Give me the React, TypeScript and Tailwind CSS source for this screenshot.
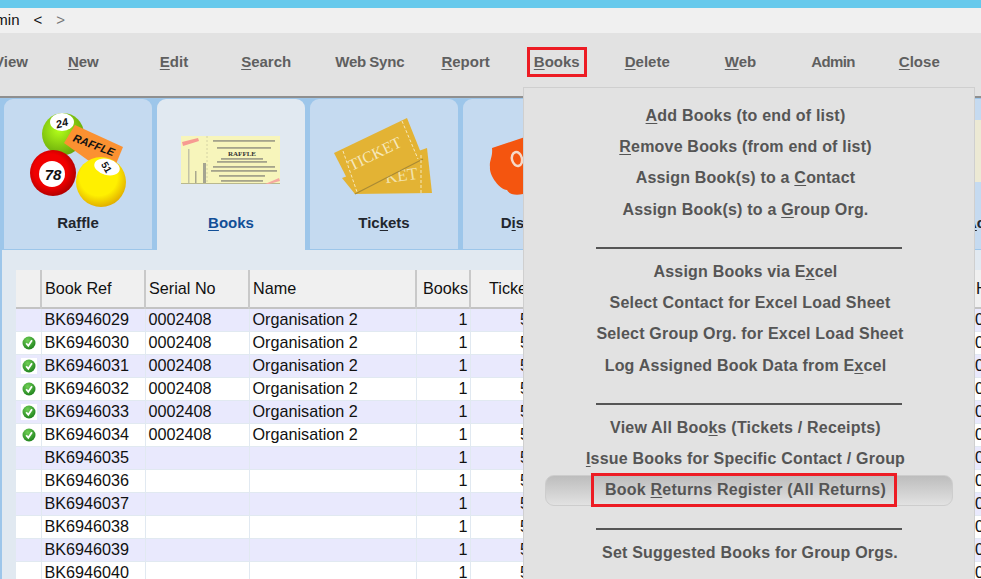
import type { ReactNode } from 'react';

const rows = [
  { ref: 'BK6946029', serial: '0002408', name: 'Organisation 2', ok: false },
  { ref: 'BK6946030', serial: '0002408', name: 'Organisation 2', ok: true },
  { ref: 'BK6946031', serial: '0002408', name: 'Organisation 2', ok: true },
  { ref: 'BK6946032', serial: '0002408', name: 'Organisation 2', ok: true },
  { ref: 'BK6946033', serial: '0002408', name: 'Organisation 2', ok: true },
  { ref: 'BK6946034', serial: '0002408', name: 'Organisation 2', ok: true },
  { ref: 'BK6946035', serial: '', name: '', ok: false },
  { ref: 'BK6946036', serial: '', name: '', ok: false },
  { ref: 'BK6946037', serial: '', name: '', ok: false },
  { ref: 'BK6946038', serial: '', name: '', ok: false },
  { ref: 'BK6946039', serial: '', name: '', ok: false },
  { ref: 'BK6946040', serial: '', name: '', ok: false },
];

function ToolItem({ className, children }: { className: string; children: ReactNode }) {
  return <span className={'shrink-0 whitespace-nowrap ' + className}>{children}</span>;
}

function Toolbar() {
  return (
    <div className="flex h-[63px] items-center bg-[#e2e2e2] pb-[5px] text-[15px] font-bold text-[#5f5f5f]">
      <ToolItem className="ml-[-6px]">View</ToolItem>
      <ToolItem className="ml-[40px]"><u className="underline-offset-2">N</u>ew</ToolItem>
      <ToolItem className="ml-[61px]"><u className="underline-offset-2">E</u>dit</ToolItem>
      <ToolItem className="ml-[53px]"><u className="underline-offset-2">S</u>earch</ToolItem>
      <ToolItem className="ml-[44px] tracking-[-0.15px] [word-spacing:-1px]">Web Sync</ToolItem>
      <ToolItem className="ml-[37px]"><u className="underline-offset-2">R</u>eport</ToolItem>
      <ToolItem className="ml-[37px] border-[3px] border-[#ed1c24] flex h-[30px] w-[60px] items-center justify-center">
        <span><u className="underline-offset-2">B</u>ooks</span>
      </ToolItem>
      <ToolItem className="ml-[38px]"><u className="underline-offset-2">D</u>elete</ToolItem>
      <ToolItem className="ml-[55px]"><u className="underline-offset-2">W</u>eb</ToolItem>
      <ToolItem className="ml-[55px] tracking-[-0.6px]">Admin</ToolItem>
      <ToolItem className="ml-[44px]"><u className="underline-offset-2">C</u>lose</ToolItem>
    </div>
  );
}

function RaffleArt() {
  return (
    <svg viewBox="0 0 148 110" className="h-[110px] w-[148px]">
      <defs>
        <radialGradient id="gb" cx="0.4" cy="0.4" r="0.7">
          <stop offset="0" stopColor="#b4ff1a" />
          <stop offset="1" stopColor="#5f9e08" />
        </radialGradient>
        <radialGradient id="rb" cx="0.45" cy="0.45" r="0.6">
          <stop offset="0.6" stopColor="#f00000" />
          <stop offset="1" stopColor="#a50000" />
        </radialGradient>
        <radialGradient id="yb" cx="0.45" cy="0.4" r="0.68">
          <stop offset="0.55" stopColor="#fff000" />
          <stop offset="1" stopColor="#d89a00" />
        </radialGradient>
      </defs>
      <circle cx="59" cy="35" r="21" fill="url(#gb)" />
      <ellipse cx="58" cy="23" rx="12" ry="9" fill="#fff" />
      <text x="58" y="28" textAnchor="middle" transform="rotate(-15 58 24)" fontSize="11" fontWeight="700" fontStyle="italic" fill="#111" fontFamily="'Liberation Sans', sans-serif">24</text>
      <polygon points="71,26 119,48 112,65 85,62 60,44" fill="#fb9131" />
      <text x="90" y="50" textAnchor="middle" transform="rotate(21 90 46)" fontSize="11" fontWeight="700" fontStyle="italic" fill="#111" fontFamily="'Liberation Sans', sans-serif">RAFFLE</text>
      <circle cx="49" cy="74" r="23" fill="url(#rb)" />
      <circle cx="48" cy="75" r="13" fill="#fff" />
      <text x="49" y="81" textAnchor="middle" fontSize="15" fontWeight="700" fontStyle="italic" fill="#111" fontFamily="'Liberation Sans', sans-serif">78</text>
      <circle cx="97" cy="83" r="25" fill="url(#yb)" />
      <ellipse cx="103" cy="68" rx="13" ry="8" fill="#fff" transform="rotate(15 103 68)" />
      <text x="103" y="72" textAnchor="middle" transform="rotate(60 103 68)" fontSize="10" fontWeight="700" fill="#111" fontFamily="'Liberation Sans', sans-serif">51</text>
    </svg>
  );
}

function BooksArt() {
  const lines = [
    [41, 56, 62], [48, 60, 54], [59, 64, 42], [62, 60, 50], [67, 56, 62], [71, 54, 66], [76, 62, 46], [81, 64, 42],
  ];
  return (
    <svg viewBox="0 0 148 110" className="h-[110px] w-[148px]">
      <rect x="24" y="37" width="99" height="48" fill="#f7f5bb" />
      <rect x="24" y="84" width="99" height="1" fill="#b9b88e" />
      <polygon points="25,43 41,39 42,42 26,47" fill="#f79a92" />
      <line x1="50" y1="37" x2="50" y2="85" stroke="#d4d2a4" strokeDasharray="2 2" />
      <rect x="31" y="50" width="1.5" height="34" fill="#c4c3a6" />
      <rect x="38" y="72" width="1.5" height="12" fill="#a9a88e" />
      <rect x="46" y="64" width="3" height="20" fill="#a5a591" />
      {lines.map(([y, x, w]) => (
        <rect key={y} x={x} y={y} width={w} height="1.8" fill="#a5a48b" />
      ))}
      <text x="85" y="57" textAnchor="middle" fontSize="7" fontWeight="700" fill="#333" fontFamily="'Liberation Serif', serif">RAFFLE</text>
      <polygon points="108,85 122,79 123,82 112,85" fill="#f5a8a0" />
    </svg>
  );
}

function TicketsArt() {
  return (
    <svg viewBox="0 0 148 110" className="h-[110px] w-[148px]">
      <polygon points="32,79 117,49 122,94 45,95" fill="#e3b334" />
      <text x="92" y="82" textAnchor="middle" transform="rotate(-8 92 82)" fontSize="17" fill="#f2e2ab" fontFamily="'Liberation Serif', serif">KET</text>
      <polygon points="24,54 97,19 113,59 45,95" fill="#e3b334" />
      <line x1="45" y1="95" x2="113" y2="60" stroke="#a98a35" strokeWidth="1.2" />
      <text x="65" y="60" textAnchor="middle" transform="rotate(-26 65 55)" fontSize="16" fill="#f6e8bb" fontFamily="'Liberation Serif', serif">TICKET</text>
      <line x1="33" y1="52" x2="47" y2="93" stroke="#f6e8bb" strokeDasharray="3 2" />
      <line x1="92" y1="22" x2="108" y2="60" stroke="#f6e8bb" strokeDasharray="3 2" />
      <line x1="111" y1="56" x2="111" y2="94" stroke="#f6e8bb" strokeDasharray="3 2" />
    </svg>
  );
}

function DiscountArt() {
  return (
    <svg viewBox="0 0 148 110" className="h-[110px] w-[148px]">
      <path d="M29 49 L 62 38 L 120 30 L 125 90 L 60 95 C 52 97 46 95 44 91 C 36 90 26 76 27 68 C 26 62 30 58 29 49 Z" fill="#f4550f" />
      <ellipse cx="54" cy="60" rx="5" ry="7" fill="none" stroke="#f5d9c8" strokeWidth="2.5" transform="rotate(-15 54 60)" />
    </svg>
  );
}

function PaleArt() {
  return (
    <svg viewBox="0 0 148 110" className="h-[110px] w-[148px]">
      <rect x="53" y="21" width="70" height="62" fill="#ece9d4" />
    </svg>
  );
}

function Tab({ art, active, children }: { art: ReactNode; active?: boolean; children?: ReactNode }) {
  return (
    <div
      className={
        'flex w-[148px] shrink-0 flex-col items-center rounded-t-[9px] ' +
        (active ? 'h-[151px] bg-[#e1e9f1] text-[#124f97]' : 'h-[150px] bg-[#c5daf0] text-[#22262e]')
      }
    >
      {art}
      <div className="mt-[4px] h-[20px] text-[15px] font-bold leading-[20px]">{children}</div>
    </div>
  );
}

function TabStrip() {
  return (
    <div className="flex h-[152px] items-start gap-[5px] border-b border-[#9dc6ea] bg-[#9dc6ea] pl-[4px] pt-[1px]">
      <Tab art={<RaffleArt />}>Ra<u className="underline-offset-2">f</u>fle</Tab>
      <Tab art={<BooksArt />} active><u className="underline-offset-2">B</u>ooks</Tab>
      <Tab art={<TicketsArt />}>Tic<u className="underline-offset-2">k</u>ets</Tab>
      <Tab art={<DiscountArt />}>D<u className="underline-offset-2">i</u>scounts</Tab>
      <Tab art={null} />
      <Tab art={null} />
      <Tab art={<PaleArt />}><u className="underline-offset-2">A</u>ccount</Tab>
    </div>
  );
}

function CheckIcon() {
  return (
    <svg viewBox="0 0 14 14" className="h-[14px] w-[14px]">
      <defs>
        <radialGradient id="ck" cx="0.4" cy="0.3" r="0.8">
          <stop offset="0" stopColor="#6fcf55" />
          <stop offset="1" stopColor="#177a17" />
        </radialGradient>
      </defs>
      <circle cx="7" cy="7" r="6.5" fill="url(#ck)" />
      <path d="M4.2 7.2 L6.3 9.8 L10 4.2" fill="none" stroke="#fff" strokeWidth="1.8" />
    </svg>
  );
}

function BookTable() {
  const th = 'border-r-2 border-[#c9c9c9] px-[3px] pb-[2px] text-left font-normal';
  const td = 'overflow-hidden whitespace-nowrap px-[3px] pt-0 pb-[2px]';
  return (
    <table className="w-[1060px] table-fixed border-collapse text-[16.2px] leading-[20px] text-[#111]">
      <colgroup>
        <col className="w-[25px]" />
        <col className="w-[104px]" />
        <col className="w-[104px]" />
        <col className="w-[167px]" />
        <col className="w-[54px]" />
        <col className="w-[80px]" />
        <col className="w-[422px]" />
        <col className="w-[104px]" />
      </colgroup>
      <thead>
        <tr className="h-[38px] border-b-2 border-[#c3c3c3] bg-[#f0f0f0]">
          <th className={th} />
          <th className={th}>Book Ref</th>
          <th className={th}>Serial No</th>
          <th className={th}>Name</th>
          <th className={th + ' pr-[1px] text-right'}>Books</th>
          <th className={th + ' pl-[18px]'}>Tickets</th>
          <th className={th} />
          <th className="px-[3px] pb-[2px] text-left font-normal">Held</th>
        </tr>
      </thead>
      <tbody>
        {rows.map((r, i) => (
          <tr key={r.ref} className={'h-[23px] border-b border-[#e1e9f1] ' + (i % 2 === 0 ? 'bg-[#e9e9fd]' : 'bg-white')}>
            <td className="p-0 border-r border-[#e1e9f1]">
              {r.ok && (
                <div className="ml-[5px] flex h-[16px] w-[16px] items-center justify-center bg-white">
                  <CheckIcon />
                </div>
              )}
            </td>
            <td className={td + ' border-r border-[#e1e9f1]'}>{r.ref}</td>
            <td className={td + ' border-r border-[#e1e9f1]'}>{r.serial}</td>
            <td className={td + ' border-r border-[#e1e9f1]'}>{r.name}</td>
            <td className={td + ' border-r border-[#e1e9f1] pr-[2px] text-right'}>1</td>
            <td className={td + ' text-right'}>500</td>
            <td className={td} />
            <td className={td}>0</td>
          </tr>
        ))}
      </tbody>
    </table>
  );
}

// entries with a mnemonic sit a few px left of the plain ones in the original
function MenuItem({ plain, children }: { plain?: boolean; children: ReactNode }) {
  return (
    <div className={'flex h-[31.3px] items-center justify-center whitespace-nowrap ' + (plain ? 'pl-[2px]' : 'pr-[7px]')}>
      {children}
    </div>
  );
}

function MenuSep() {
  return (
    <div className="flex h-[31px] items-start justify-center pt-[22px]">
      <div className="h-[2px] w-[306px] bg-[#555]" />
    </div>
  );
}

function BooksMenu() {
  const u = 'underline-offset-2';
  return (
    <div className="absolute left-[523px] top-[87px] h-[500px] w-[452px] border border-[#cfcfcf] bg-[#e2e2e2] pt-[12px] text-[16px] font-bold tracking-[0.2px] text-[#555]">
      <MenuItem><span><u className={u}>A</u>dd Books (to end of list)</span></MenuItem>
      <MenuItem><span><u className={u}>R</u>emove Books (from end of list)</span></MenuItem>
      <MenuItem><span>Assign Book(s) to a <u className={u}>C</u>ontact</span></MenuItem>
      <MenuItem><span>Assign Book(s) to a <u className={u}>G</u>roup Org.</span></MenuItem>
      <MenuSep />
      <MenuItem><span>Assign Books via E<u className={u}>x</u>cel</span></MenuItem>
      <MenuItem plain><span>Select Contact for Excel Load Sheet</span></MenuItem>
      <MenuItem plain><span>Select Group Org. for Excel Load Sheet</span></MenuItem>
      <MenuItem><span>Log Assigned Book Data from E<u className={u}>x</u>cel</span></MenuItem>
      <MenuSep />
      <MenuItem><span>View All Boo<u className={u}>k</u>s (Tickets / Receipts)</span></MenuItem>
      <MenuItem><span><u className={u}>I</u>ssue Books for Specific Contact / Group</span></MenuItem>
      <div className="mx-[21px] flex h-[31px] items-center justify-center whitespace-nowrap rounded-[9px] border border-[#cdcdcd] bg-gradient-to-b from-[#bdbdbd] to-[#e2e2e2]">
        <span className="mr-[11px] flex h-[34px] w-[306px] shrink-0 items-center justify-center border-[3px] border-[#ed1c24] pl-[4px]">
          <span>Book <u className={u}>R</u>eturns Register (All Returns)</span>
        </span>
      </div>
      <MenuSep />
      <MenuItem plain><span>Set Suggested Books for Group Orgs.</span></MenuItem>
    </div>
  );
}

export default function App() {
  return (
    <div className="relative h-[579px] w-[981px] overflow-hidden bg-[#e1e9f1] font-['Liberation_Sans',Arial,sans-serif]">
      <div className="h-[8px] bg-[#66c9ec]" />
      <div className="flex h-[25px] items-center bg-[#f0f0f0] text-[15px] text-[#111]">
        <span className="ml-[-23px] shrink-0">Admin</span>
        <span className="ml-[14px]">&lt;</span>
        <span className="ml-[14px] text-[#777]">&gt;</span>
      </div>
      <Toolbar />
      <div className="h-[2px] bg-[#8f8f8f]" />
      <TabStrip />
      <div className="h-[329px] border-l-2 border-[#9dc6ea] pl-[14px] pt-[20px]">
        <BookTable />
      </div>
      <BooksMenu />
    </div>
  );
}
